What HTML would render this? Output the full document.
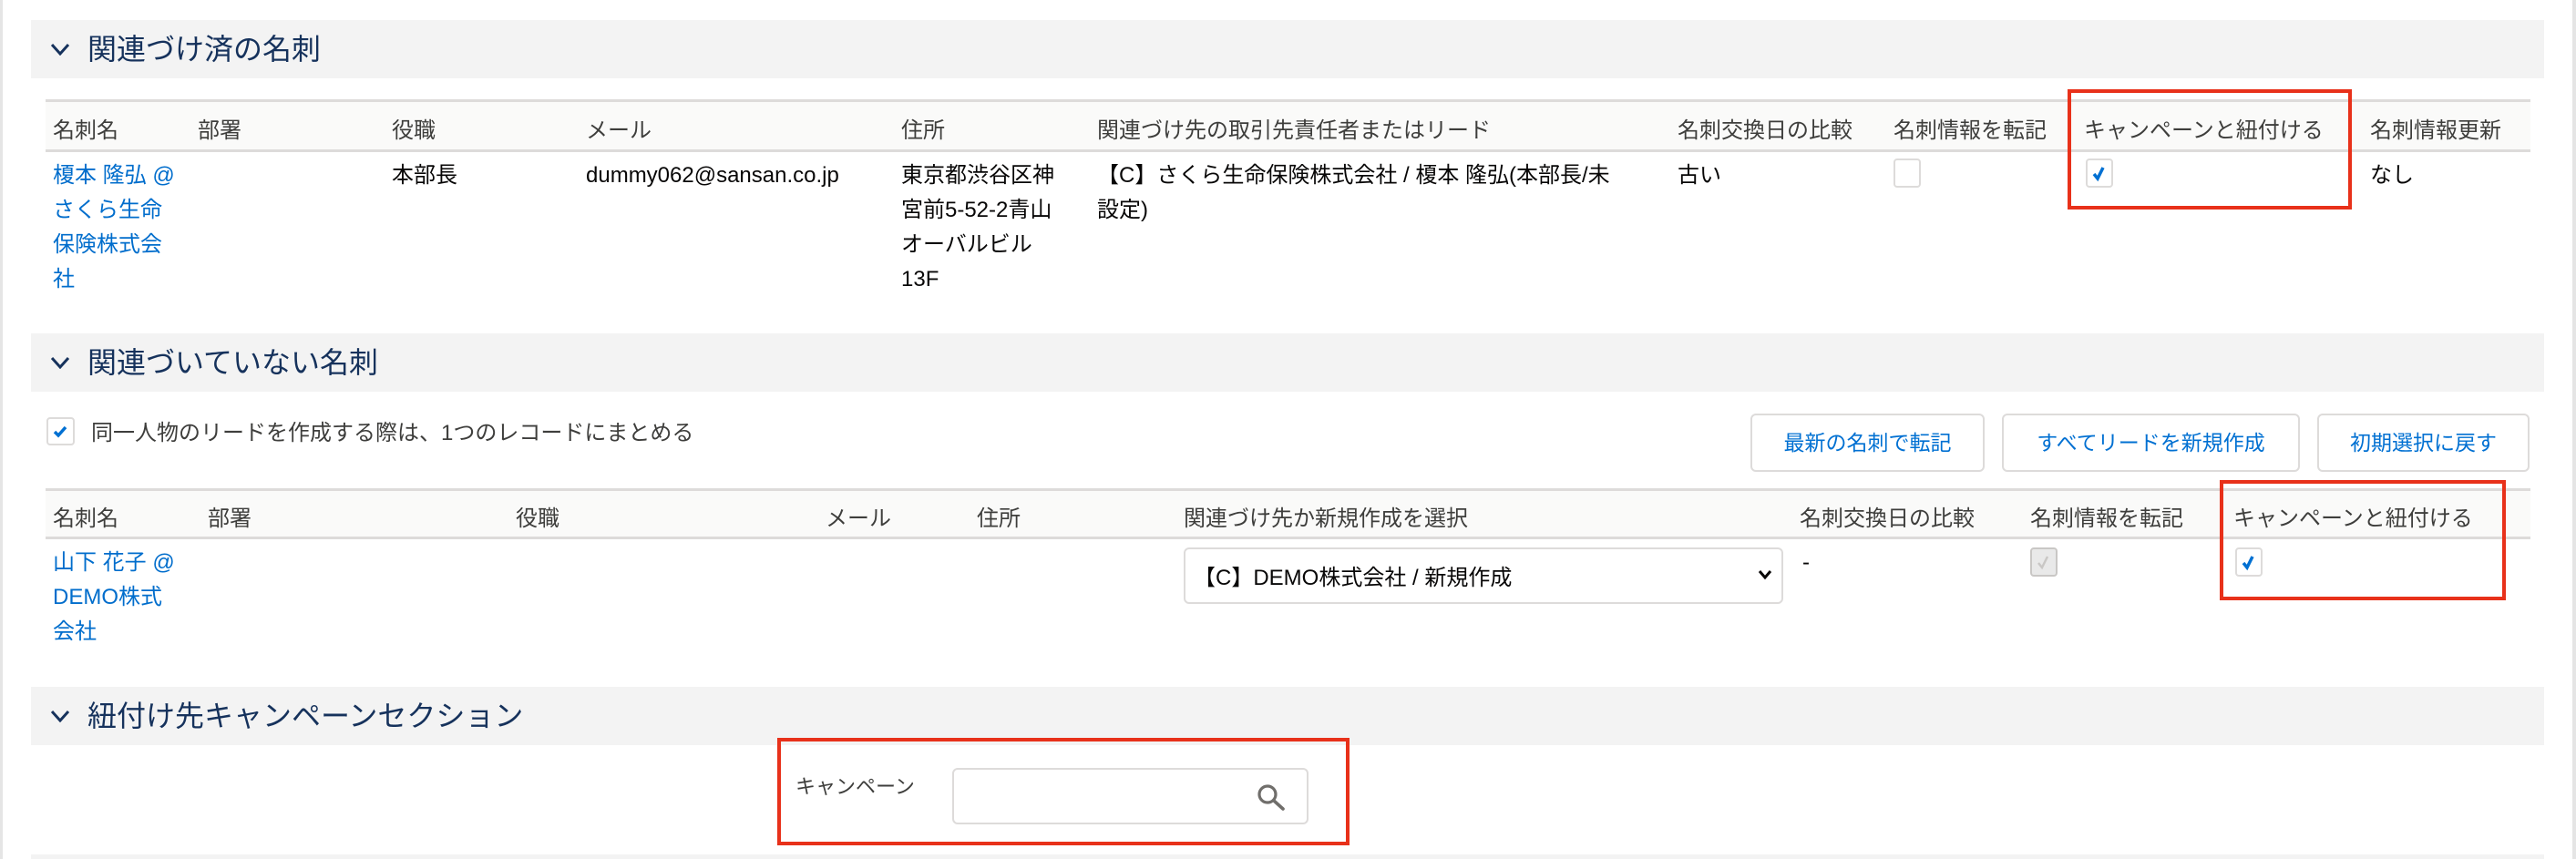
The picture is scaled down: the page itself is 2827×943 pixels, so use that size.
<!DOCTYPE html>
<html><head><meta charset="utf-8"><style>
*{margin:0;padding:0;box-sizing:border-box}
body{width:2827px;height:943px;background:#fff;position:relative;overflow:hidden;font-family:"Liberation Sans","Noto Sans CJK JP",sans-serif;color:#080707}
.a{position:absolute;white-space:nowrap}
.sh{position:absolute;left:34px;width:2758px;height:64px;background:#f3f3f3}
.st{position:absolute;left:96px;font-size:32px;color:#16325c;line-height:64px}
.chev{position:absolute;left:55px;width:22px;height:14px}
.th{position:absolute;left:50px;width:2727px;background:#fafaf9;border-top:3px solid #dddbda;border-bottom:3px solid #dddbda}
.h{position:absolute;font-size:24px;color:#3e3e3c;white-space:nowrap}
.t{position:absolute;font-size:24px;line-height:38px;white-space:nowrap}
.lk{color:#006dcc}
.cb{position:absolute;width:30px;height:32px;border:2px solid #dddbda;border-radius:4px;background:#fff}
.red{position:absolute;border:4px solid #e8311a}
.btn{position:absolute;border:2px solid #dddbda;border-radius:6px;background:#fff;color:#0070d2;font-size:23px;text-align:center;line-height:60px}
</style></head><body>
<div style="position:absolute;left:0;top:0;width:3px;height:943px;background:#e5e5e5"></div>
<div style="position:absolute;right:0;top:0;width:4px;height:943px;background:#e5e5e5"></div>

<!-- section 1 -->
<div class="sh" style="top:22px"></div>
<svg class="chev" style="top:47px" viewBox="0 0 22 14"><path d="M2 2 L11 12 L20 2" stroke="#16325c" stroke-width="3" fill="none"/></svg>
<div class="st" style="top:22px">関連づけ済の名刺</div>

<div class="th" style="top:109px;height:58px"></div>
<div class="h" style="left:58px;top:123px">名刺名</div>
<div class="h" style="left:217px;top:123px">部署</div>
<div class="h" style="left:430px;top:123px">役職</div>
<div class="h" style="left:643px;top:123px">メール</div>
<div class="h" style="left:989px;top:123px">住所</div>
<div class="h" style="left:1204px;top:123px">関連づけ先の取引先責任者またはリード</div>
<div class="h" style="left:1841px;top:123px">名刺交換日の比較</div>
<div class="h" style="left:2078px;top:123px">名刺情報を転記</div>
<div class="h" style="left:2287px;top:123px">キャンペーンと紐付ける</div>
<div class="h" style="left:2601px;top:123px">名刺情報更新</div>

<div class="t lk" style="left:58px;top:174px">榎本 隆弘 @<br>さくら生命<br>保険株式会<br>社</div>
<div class="t" style="left:430px;top:174px">本部長</div>
<div class="t" style="left:643px;top:174px">dummy062@sansan.co.jp</div>
<div class="t" style="left:989px;top:174px">東京都渋谷区神<br>宮前5-52-2青山<br>オーバルビル<br>13F</div>
<div class="t" style="left:1204px;top:174px">【C】さくら生命保険株式会社 / 榎本 隆弘(本部長/未<br>設定)</div>
<div class="t" style="left:1841px;top:174px">古い</div>
<div class="cb" style="left:2078px;top:174px"></div>
<div class="cb" style="left:2289px;top:174px"><svg width="26" height="28" viewBox="0 0 26 28"><path d="M7 15 L11 20 L17 8" stroke="#0070d2" stroke-width="3.5" fill="none"/></svg></div>
<div class="t" style="left:2601px;top:174px">なし</div>
<div class="red" style="left:2269px;top:98px;width:312px;height:132px"></div>

<!-- section 2 -->
<div class="sh" style="top:366px"></div>
<svg class="chev" style="top:391px" viewBox="0 0 22 14"><path d="M2 2 L11 12 L20 2" stroke="#16325c" stroke-width="3" fill="none"/></svg>
<div class="st" style="top:366px">関連づいていない名刺</div>

<div class="cb" style="left:51px;top:458px;width:31px;height:31px"><svg width="27" height="27" viewBox="0 0 27 27"><path d="M7 14 L11 18 L19 9" stroke="#0070d2" stroke-width="3.5" fill="none"/></svg></div>
<div class="a" style="left:100px;top:455px;font-size:24px;color:#3e3e3c">同一人物のリードを作成する際は、1つのレコードにまとめる</div>

<div class="btn" style="left:1921px;top:454px;width:257px;height:64px">最新の名刺で転記</div>
<div class="btn" style="left:2197px;top:454px;width:327px;height:64px">すべてリードを新規作成</div>
<div class="btn" style="left:2543px;top:454px;width:233px;height:64px">初期選択に戻す</div>

<div class="th" style="top:536px;height:56px"></div>
<div class="h" style="left:58px;top:549px">名刺名</div>
<div class="h" style="left:228px;top:549px">部署</div>
<div class="h" style="left:566px;top:549px">役職</div>
<div class="h" style="left:906px;top:549px">メール</div>
<div class="h" style="left:1072px;top:549px">住所</div>
<div class="h" style="left:1299px;top:549px">関連づけ先か新規作成を選択</div>
<div class="h" style="left:1975px;top:549px">名刺交換日の比較</div>
<div class="h" style="left:2228px;top:549px">名刺情報を転記</div>
<div class="h" style="left:2451px;top:549px">キャンペーンと紐付ける</div>

<div class="t lk" style="left:58px;top:599px">山下 花子 @<br>DEMO株式<br>会社</div>
<div style="position:absolute;left:1299px;top:601px;width:658px;height:62px;border:2px solid #dddbda;border-radius:6px;background:#fff"></div>
<div class="a" style="left:1310px;top:614px;font-size:24px">【C】DEMO株式会社 / 新規作成</div>
<svg style="position:absolute;left:1929px;top:624px" width="16" height="14" viewBox="0 0 16 14"><path d="M2 3 L8 10 L14 3" stroke="#080707" stroke-width="3" fill="none"/></svg>
<div class="a" style="left:1978px;top:604px;font-size:24px">-</div>
<div class="cb" style="left:2228px;top:601px;background:#e9e9e9;border-color:#c9c7c5"><svg width="26" height="28" viewBox="0 0 26 28"><path d="M7 15 L11 20 L17 8" stroke="#c9c7c5" stroke-width="2.5" fill="none"/></svg></div>
<div class="cb" style="left:2453px;top:601px"><svg width="26" height="28" viewBox="0 0 26 28"><path d="M7 15 L11 20 L17 8" stroke="#0070d2" stroke-width="3.5" fill="none"/></svg></div>
<div class="red" style="left:2436px;top:527px;width:314px;height:132px"></div>

<!-- section 3 -->
<div class="sh" style="top:754px"></div>
<svg class="chev" style="top:779px" viewBox="0 0 22 14"><path d="M2 2 L11 12 L20 2" stroke="#16325c" stroke-width="3" fill="none"/></svg>
<div class="st" style="top:754px">紐付け先キャンペーンセクション</div>

<div class="a" style="left:873px;top:846px;font-size:22px;color:#3e3e3c">キャンペーン</div>
<div style="position:absolute;left:1045px;top:843px;width:391px;height:62px;border:2px solid #dddbda;border-radius:6px;background:#fff"></div>
<svg style="position:absolute;left:1378px;top:859px" width="36" height="34" viewBox="0 0 36 34"><circle cx="13" cy="13" r="9" stroke="#706e6b" stroke-width="3.2" fill="none"/><path d="M20 20 L30 29" stroke="#706e6b" stroke-width="3.6" stroke-linecap="round"/></svg>
<div class="red" style="left:853px;top:810px;width:628px;height:118px"></div>

<div style="position:absolute;left:34px;top:938px;width:2758px;height:5px;background:#f3f3f3"></div>
</body></html>
